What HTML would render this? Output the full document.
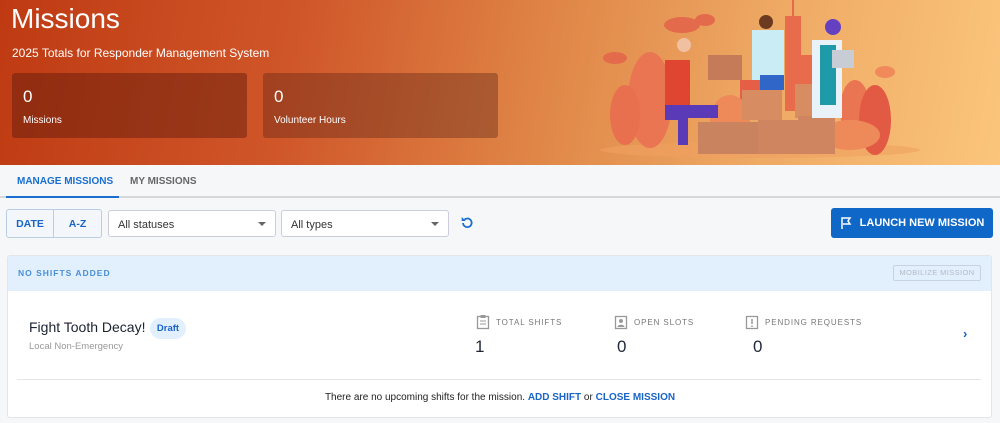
<!DOCTYPE html>
<html><head><style>
*{margin:0;padding:0;box-sizing:border-box}
body{width:1000px;height:423px;overflow:hidden;background:#f6f7f9;font-family:"Liberation Sans",Arial,sans-serif;position:relative}
.hdr{position:absolute;left:0;top:0;width:1000px;height:165px;background:linear-gradient(100deg,#bf3a12 0%,#d0572a 30%,#e08748 55%,#eea863 75%,#fbc57c 100%)}
.abs{position:absolute}
h1{position:absolute;left:11px;top:3px;color:#fff;font-weight:400;font-size:28px}
.sub{left:12px;top:46px;color:#fff;font-size:12px}
.box{top:73px;width:235px;height:65px;border-radius:3px;color:#fff}
.box .n{position:absolute;left:11px;top:14px;font-size:17px}
.tabs{left:0;top:165px;width:1000px;height:33px;background:#f6f7f9;border-bottom:2px solid #d5d7da}
.tab{top:176px;font-size:10px;font-weight:700}
.btn{border:1px solid #b9cde3;background:#f3f7fb;color:#1a64c6;font-size:10.5px;font-weight:700;display:flex;align-items:center;justify-content:center}
.sel{top:210px;height:27px;background:#fff;border:1px solid #ccd;border-radius:3px;font-size:11px;color:#333;padding:8px 9px}
.sel:after{content:"";position:absolute;right:9px;top:11px;border:4px solid transparent;border-top:4px solid #666}
.card{left:7px;top:255px;width:985px;height:163px;background:#fff;border:1px solid #e2e5e9;border-radius:3px}
.lbl{font-size:8px;letter-spacing:.9px;color:#777;top:318px}
.num{font-size:17px;color:#1d2838;top:337px}
</style></head><body>
<div class="hdr"></div>
<h1>Missions</h1>
<div class="abs sub">2025 Totals for Responder Management System</div>
<div class="abs box" style="left:12px;background:rgba(90,25,10,.45)"><span class="n">0</span></div>
<div class="abs" style="left:23px;top:115px;color:#fff;font-size:10px">Missions</div>
<div class="abs box" style="left:263px;background:rgba(90,35,20,.38)"><span class="n">0</span></div>
<div class="abs" style="left:274px;top:115px;color:#fff;font-size:10px">Volunteer Hours</div>
<svg class="abs" style="left:580px;top:0" width="420" height="165" viewBox="0 0 420 165">
<ellipse cx="180" cy="150" rx="160" ry="8" fill="#f0a060" opacity=".6"/>
<rect x="212" y="0" width="2" height="18" fill="#e46a4a"/>
<rect x="205" y="16" width="16" height="95" fill="#e86c4c"/>
<rect x="221" y="55" width="12" height="55" fill="#e86c4c"/>
<rect x="160" y="80" width="30" height="25" fill="#e45f45"/>
<ellipse cx="102" cy="25" rx="18" ry="8" fill="#e46a4c"/>
<ellipse cx="125" cy="20" rx="10" ry="6" fill="#e46a4c"/>
<ellipse cx="35" cy="58" rx="12" ry="6" fill="#e46a4c"/>
<ellipse cx="305" cy="72" rx="10" ry="6" fill="#f08a5a"/>
<ellipse cx="70" cy="100" rx="22" ry="48" fill="#ea7552"/>
<ellipse cx="45" cy="115" rx="15" ry="30" fill="#e8704e"/>
<ellipse cx="275" cy="110" rx="15" ry="30" fill="#ea7552"/>
<ellipse cx="295" cy="120" rx="16" ry="35" fill="#e25a44"/>
<ellipse cx="150" cy="120" rx="20" ry="25" fill="#ee8a5a"/>
<ellipse cx="270" cy="135" rx="30" ry="15" fill="#ee8a5a"/>
<rect x="118" y="122" width="60" height="32" fill="#c9835e"/>
<rect x="162" y="90" width="40" height="30" fill="#d88c62"/>
<rect x="215" y="84" width="45" height="34" fill="#d88c62"/>
<rect x="178" y="120" width="40" height="34" fill="#cf8660"/>
<rect x="218" y="116" width="37" height="38" fill="#cf8660"/>
<rect x="128" y="55" width="34" height="25" fill="#c57b58"/>
<rect x="85" y="60" width="25" height="48" fill="#df4530"/>
<path d="M85 105 L138 105 L138 118 L108 118 L108 145 L98 145 L98 120 L85 120Z" fill="#5b3ab8"/>
<circle cx="104" cy="45" r="7" fill="#f1c0a0"/>
<rect x="172" y="30" width="32" height="50" fill="#c9ecf5"/>
<rect x="180" y="75" width="24" height="15" fill="#2f66c8"/>
<circle cx="186" cy="22" r="7" fill="#6b3a20"/>
<rect x="232" y="40" width="30" height="78" fill="#e8f2f8"/>
<rect x="240" y="45" width="16" height="60" fill="#1f9aa8"/>
<circle cx="253" cy="27" r="8" fill="#6540c0"/>
<rect x="252" y="50" width="22" height="18" fill="#c8ccd4"/>
</svg>
<div class="abs tabs"></div>
<div class="abs tab" style="left:17px;color:#1a6ed0">MANAGE MISSIONS</div>
<div class="abs" style="left:6px;top:196px;width:113px;height:2px;background:#1a6ed0"></div>
<div class="abs tab" style="left:130px;color:#666">MY MISSIONS</div>
<div class="abs btn" style="left:6px;top:209px;width:48px;height:29px;border-radius:3px 0 0 3px">DATE</div>
<div class="abs btn" style="left:53px;top:209px;width:49px;height:29px;border-radius:0 3px 3px 0">A-Z</div>
<div class="abs sel" style="left:108px;width:168px">All statuses</div>
<div class="abs sel" style="left:281px;width:168px">All types</div>
<svg class="abs" style="left:459px;top:215px" width="16" height="16" viewBox="0 0 24 24"><path d="M6 12a6.5 6.5 0 1 0 2-5" fill="none" stroke="#1a6ed0" stroke-width="2.6"/><path d="M4 3v6h6z" fill="#1a6ed0"/></svg>
<div class="abs" style="left:831px;top:208px;width:162px;height:30px;background:#0f67c8;border-radius:3px;color:#fff;font-size:11px;font-weight:700;display:flex;align-items:center;justify-content:center;gap:8px"><svg width="12" height="12" viewBox="0 0 12 12"><path d="M2 12V1h8l-2 3 2 3H3" fill="none" stroke="#fff" stroke-width="1.5"/></svg>LAUNCH NEW MISSION</div>
<div class="abs card"></div>
<div class="abs" style="left:8px;top:256px;width:983px;height:35px;background:#e2effc"></div>
<div class="abs" style="left:18px;top:268px;font-size:8.5px;letter-spacing:1px;color:#4a8fd6;font-weight:700">NO SHIFTS ADDED</div>
<div class="abs" style="left:893px;top:265px;width:88px;height:16px;border:1px solid #c8d3df;border-radius:2px;font-size:7.5px;color:#b3bcc6;letter-spacing:.4px;text-align:center;line-height:14px">MOBILIZE MISSION</div>
<div class="abs" style="left:29px;top:319px;font-size:14px;color:#1b2230">Fight Tooth Decay!</div>
<div class="abs" style="left:150px;top:318px;width:36px;height:21px;border-radius:11px;background:#e2effc;color:#1a64c6;font-size:9.5px;font-weight:700;text-align:center;line-height:21px">Draft</div>
<div class="abs" style="left:29px;top:341px;font-size:9.5px;color:#999">Local Non-Emergency</div>
<svg class="abs" style="left:476px;top:314px" width="14" height="16"><rect x="1.5" y="2.5" width="11" height="12" fill="none" stroke="#999" stroke-width="1.3"/><path d="M4 7h6M4 10h6" stroke="#999"/><rect x="4.5" y="1" width="5" height="3" fill="#999"/></svg>
<div class="abs lbl" style="left:496px">TOTAL SHIFTS</div>
<svg class="abs" style="left:614px;top:314px" width="14" height="16"><rect x="1.5" y="2.5" width="11" height="12" fill="none" stroke="#999" stroke-width="1.3"/><circle cx="7" cy="7" r="2" fill="#999"/><path d="M3.5 13c0-3 7-3 7 0" fill="#999"/></svg>
<div class="abs lbl" style="left:634px">OPEN SLOTS</div>
<svg class="abs" style="left:745px;top:314px" width="14" height="16"><rect x="1.5" y="2.5" width="11" height="12" fill="none" stroke="#999" stroke-width="1.3"/><path d="M7 5v5M7 11.5v1.5" stroke="#999" stroke-width="1.5"/></svg>
<div class="abs lbl" style="left:765px">PENDING REQUESTS</div>
<div class="abs num" style="left:475px">1</div>
<div class="abs num" style="left:617px">0</div>
<div class="abs num" style="left:753px">0</div>
<div class="abs" style="left:963px;top:326px;color:#1a64c6;font-size:13px;font-weight:700">›</div>
<div class="abs" style="left:17px;top:379px;width:964px;height:1px;background:#e2e5e9"></div>
<div class="abs" style="left:0;width:1000px;top:392px;text-align:center;font-size:10px;color:#222">There are no upcoming shifts for the mission. <b style="color:#1a64c6">ADD SHIFT</b> or <b style="color:#1a64c6">CLOSE MISSION</b></div>
</body></html>
